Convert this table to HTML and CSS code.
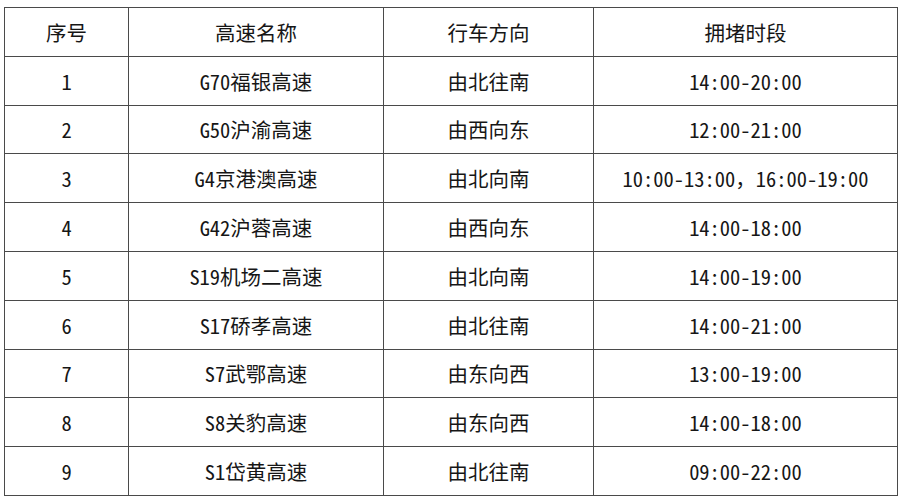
FILE: index.html
```html
<!DOCTYPE html>
<html lang="zh-CN">
<head>
<meta charset="utf-8">
<link rel="stylesheet" href="styles.css">
</head>
<body>
<table class="jam">
  <colgroup>
    <col class="c1"><col class="c2"><col class="c3"><col class="c4">
  </colgroup>
  <tr><td>序号</td><td>高速名称</td><td>行车方向</td><td>拥堵时段</td></tr>
  <tr><td>1</td><td>G70福银高速</td><td>由北往南</td><td>14:00-20:00</td></tr>
  <tr><td>2</td><td>G50沪渝高速</td><td>由西向东</td><td>12:00-21:00</td></tr>
  <tr><td>3</td><td>G4京港澳高速</td><td>由北向南</td><td>10:00-13:00<span class="fw">，</span>16:00-19:00</td></tr>
  <tr><td>4</td><td>G42沪蓉高速</td><td>由西向东</td><td>14:00-18:00</td></tr>
  <tr><td>5</td><td>S19机场二高速</td><td>由北向南</td><td>14:00-19:00</td></tr>
  <tr><td>6</td><td>S17硚孝高速</td><td>由北往南</td><td>14:00-21:00</td></tr>
  <tr><td>7</td><td>S7武鄂高速</td><td>由东向西</td><td>13:00-19:00</td></tr>
  <tr><td>8</td><td>S8关豹高速</td><td>由东向西</td><td>14:00-18:00</td></tr>
  <tr><td>9</td><td>S1岱黄高速</td><td>由北往南</td><td>09:00-22:00</td></tr>
</table>
</body>
</html>
```
FILE: styles.css
```css
html, body {
  margin: 0;
  padding: 0;
  background: #ffffff;
}
body {
  padding: 7px 0 0 4px;
}
.jam {
  border-collapse: collapse;
  table-layout: fixed;
  width: 894px;
  font-family: "Noto Sans CJK SC", sans-serif;
  font-feature-settings: "hwid" 1;
  font-size: 20.5px;
  color: #161616;
}
.c1 { width: 124px; }
.c2 { width: 255px; }
.c3 { width: 210px; }
.c4 { width: 304px; }
.jam tr {
  height: 48.8px;
}
.jam td {
  border: 1px solid #4a4a4a;
  text-align: center;
  vertical-align: middle;
  padding: 0;
  line-height: 24px;
}
.fw {
  font-feature-settings: normal;
}
```
